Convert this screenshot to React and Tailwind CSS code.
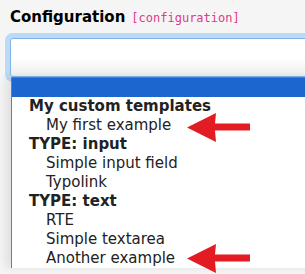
export default function App() {
  const rows = [
    { label: 'My custom templates', group: true },
    { label: 'My first example', arrow: true },
    { label: 'TYPE: input', group: true },
    { label: 'Simple input field' },
    { label: 'Typolink' },
    { label: 'TYPE: text', group: true },
    { label: 'RTE' },
    { label: 'Simple textarea' },
    { label: 'Another example', arrow: true },
  ];

  return (
    <div className="w-[305px] h-[274px] overflow-hidden bg-[#f5f5f5] font-['DejaVu_Sans',sans-serif]">
      <div className="flex items-baseline gap-[6px] pl-[10px] pt-[7px] h-[27px] leading-[20px]">
        <span className="text-[15px] font-bold text-black">Configuration</span>
        <span className="text-[12px] text-[#e0398b] font-['DejaVu_Sans_Mono',monospace]">[configuration]</span>
      </div>

      <div className="ml-[10px] mt-[11px] w-[400px] h-[39px] rounded-[3px] border border-[#7fb4ea] bg-gradient-to-b from-white via-white to-[#eeeeee] shadow-[0_0_0_5px_#bcd9f5]" />

      <div className="relative ml-[11px] w-[400px] border-t border-l border-[#7a7a7a] bg-white shadow-[-6px_0_8px_rgba(0,0,0,0.08)] text-[15px] text-[#222]">
        <div className="h-[19px] bg-[#1b66cf]" />
        {rows.map((r) => (
          <div
            key={r.label}
            className={
              r.group
                ? 'h-[19px] leading-[19px] pl-[17px] font-bold'
                : 'h-[19px] leading-[19px] pl-[34px]'
            }
          >
            {r.label}
          </div>
        ))}

        <Arrow className="absolute left-[175px] top-[35px]" />
        <Arrow className="absolute left-[175px] top-[166px]" />
      </div>
    </div>
  );
}

const Arrow = ({ className }) => (
  <svg className={className} width="64" height="29" viewBox="0 0 64 29">
    <polygon points="0,14.5 29,0 28,10.5 63,10.5 63,17.5 28,17.5 29,29" fill="#e31b23" />
  </svg>
);
